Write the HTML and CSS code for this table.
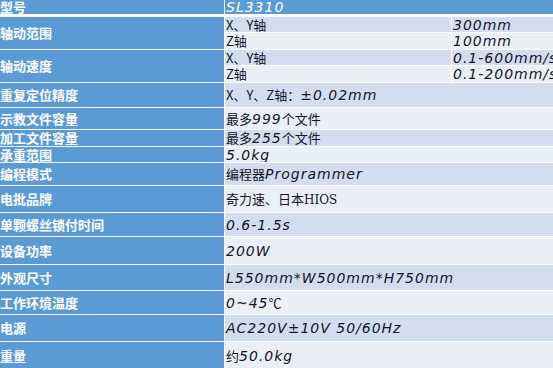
FILE: index.html
```html
<!DOCTYPE html>
<html lang="zh-CN">
<head>
<meta charset="utf-8">
<title>SL3310 参数</title>
<link rel="stylesheet" href="styles.css">
</head>
<body>
<div class="sheet">
  <div class="lbl r1"><span class="t">型号</span></div>
  <div class="val head wide r1"><span class="t"><span class="en">SL3310</span></span></div>

  <div class="lbl span2"><span class="t">轴动范围</span></div>
  <div class="val dark"><span class="t">X、Y轴</span></div>
  <div class="val dark"><span class="t"><span class="en">300mm</span></span></div>
  <div class="val light"><span class="t">Z轴</span></div>
  <div class="val light"><span class="t"><span class="en">100mm</span></span></div>

  <div class="lbl span2"><span class="t">轴动速度</span></div>
  <div class="val dark"><span class="t">X、Y轴</span></div>
  <div class="val dark"><span class="t"><span class="en">0.1-600mm/s</span></span></div>
  <div class="val light"><span class="t">Z轴</span></div>
  <div class="val light"><span class="t"><span class="en">0.1-200mm/s</span></span></div>

  <div class="lbl"><span class="t">重复定位精度</span></div>
  <div class="val dark wide"><span class="t">X、Y、Z轴：<span class="en">±0.02mm</span></span></div>

  <div class="lbl"><span class="t">示教文件容量</span></div>
  <div class="val light wide"><span class="t">最多<span class="en">999</span>个文件</span></div>

  <div class="lbl"><span class="t">加工文件容量</span></div>
  <div class="val dark wide"><span class="t">最多<span class="en">255</span>个文件</span></div>

  <div class="lbl"><span class="t">承重范围</span></div>
  <div class="val light wide"><span class="t"><span class="en">5.0kg</span></span></div>

  <div class="lbl"><span class="t">编程模式</span></div>
  <div class="val dark wide"><span class="t">编程器<span class="en">Programmer</span></span></div>

  <div class="lbl"><span class="t">电批品牌</span></div>
  <div class="val light wide"><span class="t">奇力速、日本<span class="serif">HIOS</span></span></div>

  <div class="lbl"><span class="t">单颗螺丝锁付时间</span></div>
  <div class="val dark wide"><span class="t"><span class="en">0.6-1.5s</span></span></div>

  <div class="lbl"><span class="t">设备功率</span></div>
  <div class="val light wide"><span class="t"><span class="en">200W</span></span></div>

  <div class="lbl"><span class="t">外观尺寸</span></div>
  <div class="val dark wide"><span class="t"><span class="en">L550mm*W500mm*H750mm</span></span></div>

  <div class="lbl"><span class="t">工作环境温度</span></div>
  <div class="val light wide"><span class="t"><span class="en">0~45</span>℃</span></div>

  <div class="lbl"><span class="t">电源</span></div>
  <div class="val dark wide"><span class="t"><span class="en">AC220V±10V 50/60Hz</span></span></div>

  <div class="lbl"><span class="t">重量</span></div>
  <div class="val light wide"><span class="t">约<span class="en">50.0kg</span></span></div>
</div>
</body>
</html>
```
FILE: styles.css
```css
html, body {
  margin: 0;
  padding: 0;
  background: #ffffff;
  overflow: hidden;
}

.sheet {
  display: grid;
  width: 660px;
  grid-template-columns: 224px 226px 1fr;
  grid-template-rows: 16px 15px 16px 15px 16px 24px 21px 16px 15px 22px 26px 23px 27px 25px 23px 26px 27px;
  gap: 1px;
  background: #ffffff;
  font-family: "Noto Sans CJK SC", "DejaVu Sans", sans-serif;
  font-size: 13px;
}

.lbl {
  background: #5b9bd5;
  color: #ffffff;
  font-weight: bold;
  display: flex;
  align-items: center;
  white-space: nowrap;
  overflow: hidden;
}

.val {
  display: flex;
  align-items: center;
  padding-left: 1px;
  color: #141428;
  white-space: nowrap;
  overflow: hidden;
}

.t {
  display: block;
  line-height: 14px;
}

.span2 {
  grid-row: span 2;
}

.wide {
  grid-column: 2 / 4;
}

.r1 {
  border-bottom: 2px solid #ffffff;
}

.head {
  background: #5b9bd5;
  color: #ffffff;
}

.dark {
  background: #d2deef;
}

.light {
  background: #eaeff7;
}

.en {
  font-family: "DejaVu Sans", sans-serif;
  font-style: italic;
  font-size: 14px;
  letter-spacing: 1px;
}

.serif {
  font-family: "DejaVu Serif", serif;
  font-size: 12px;
}
```
